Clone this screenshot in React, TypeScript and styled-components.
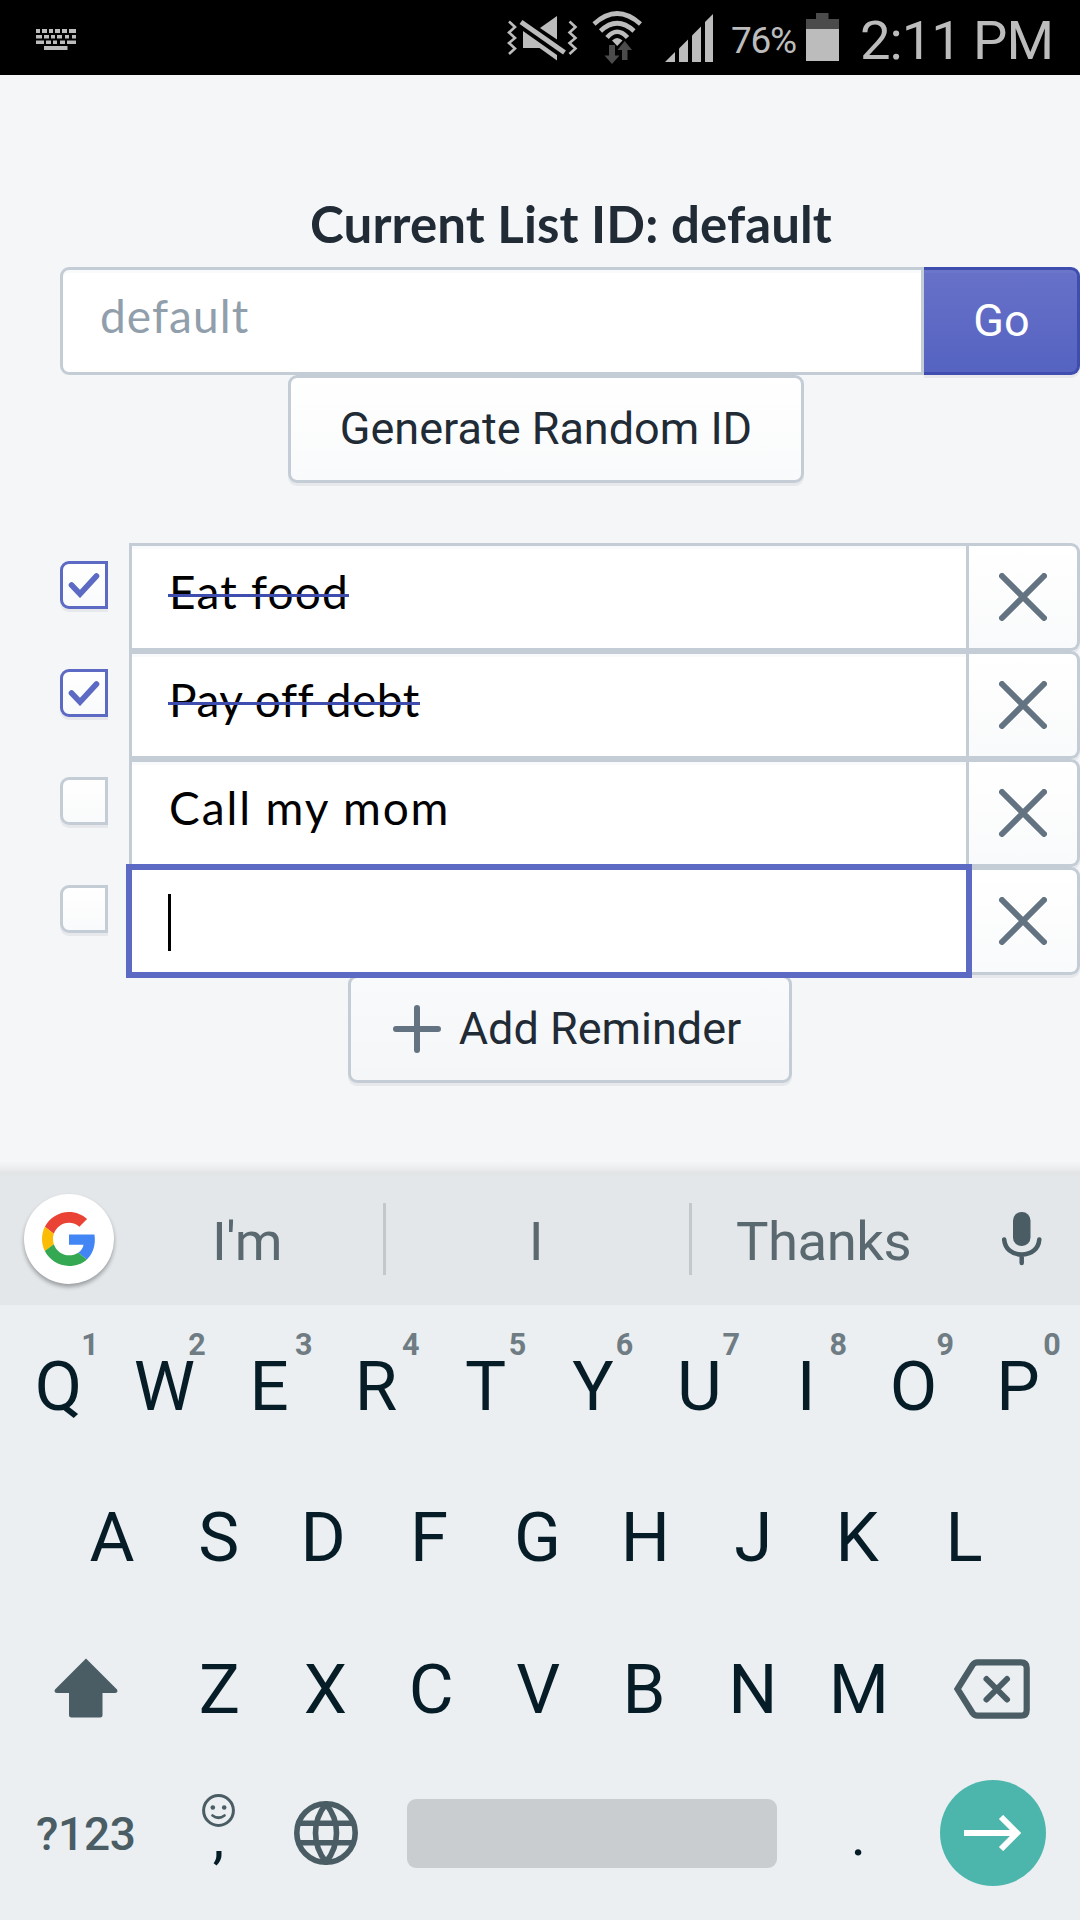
import React from "react";
import styled, { createGlobalStyle, css } from "styled-components";

const roboto = `Roboto, "Liberation Sans", sans-serif`;
const grotesk = `Lato, "Liberation Sans", sans-serif`;

const GlobalStyle = createGlobalStyle`
  *, *::before, *::after { box-sizing: border-box; }
  body { margin: 0; background: #f4f6f8; }
  button { appearance: none; margin: 0; padding: 0; border: 0; background: none; font: inherit; color: inherit; }
  svg { display: block; flex: none; }
`;

const Screen = styled.div`
  width: 1080px;
  height: 1920px;
  display: flex;
  flex-direction: column;
  overflow: hidden;
  background: #f4f6f8;
  font-family: ${roboto};
`;

/* ---------- status bar ---------- */

const StatusBar = styled.header`
  height: 75px;
  flex: none;
  display: flex;
  align-items: flex-start;
  background: #000;
  color: #bcbcbc;
`;

const StatusIcon = styled.svg<{ $left: number; $top: number }>`
  margin: ${(p) => p.$top}px 0 0 ${(p) => p.$left}px;
`;

const Battery = styled.span`
  width: 67px;
  margin: 19px 0 0 17px;
  font-size: 37px;
  line-height: 44px;
  letter-spacing: -1.3px;
  white-space: nowrap;
`;

const Clock = styled.time`
  margin: 8px 0 0 21px;
  font-size: 54.5px;
  line-height: 64px;
  letter-spacing: -1.1px;
  white-space: nowrap;
`;

/* ---------- page ---------- */

const Page = styled.main`
  height: 1086px;
  flex: none;
  padding-left: 60px;
  display: flex;
  flex-direction: column;
`;

const Title = styled.h1`
  height: 192px;
  margin: 0;
  padding: 0 0 13px 2px;
  display: flex;
  align-items: flex-end;
  justify-content: center;
  font: 700 51px/60px ${grotesk};
  letter-spacing: 0.1px;
  color: #212b36;
  white-space: nowrap;
`;

const SearchRow = styled.form`
  display: flex;
  height: 108px;
`;

const Field = styled.div<{ $rounded?: boolean; $muted?: boolean; $focused?: boolean }>`
  flex: 1;
  height: 108px;
  display: flex;
  align-items: center;
  padding: 0 36px 10px;
  background: #fff;
  border: 3px solid #c4cdd5;
  border-radius: ${(p) => (p.$rounded ? "9px 0 0 9px" : "0")};
  box-shadow: inset 0 3px 0 #f9fafb;
  font: 400 46px/60px ${grotesk};
  color: ${(p) => (p.$muted ? "#919eab" : "#000")};
  white-space: nowrap;
  ${(p) =>
    p.$focused &&
    css`
      position: relative;
      z-index: 1;
      padding-bottom: 0;
      border-color: #5c6ac4;
      box-shadow: 0 0 0 3px #5c6ac4;
    `}
`;

const FieldText = styled.span<{ $done?: boolean; $spacing: number }>`
  position: relative;
  padding-left: 1px;
  letter-spacing: ${(p) => p.$spacing}px;
  ${(p) =>
    p.$done &&
    css`
      &::after {
        content: "";
        position: absolute;
        left: 0;
        right: 0;
        top: 32px;
        height: 3px;
        background: #3f4eae;
      }
    `}
`;

const Caret = styled.span`
  width: 3px;
  height: 57px;
  background: #000;
  margin-top: 3px;
`;

const buttonText = css`
  font: 400 45px/54px ${roboto};
  white-space: nowrap;
`;

const GoButton = styled.button`
  && {
    ${buttonText}
    width: 156px;
    height: 108px;
    padding-left: 2px;
    color: #fff;
    background: linear-gradient(180deg, #6771c8, #5563c1);
    border: 3px solid #3f4eae;
    border-left: 0;
    border-radius: 0 9px 9px 0;
    box-shadow: inset 0 3px 0 #6b75c9, 0 3px 0 #e6e8ec;
  }
`;

const OutlineButton = styled.button<{ $width: number; $shift?: number; $flat?: boolean }>`
  && {
    ${buttonText}
    align-self: center;
    width: ${(p) => p.$width}px;
    height: 108px;
    margin-right: ${(p) => p.$shift ?? 0}px;
    padding-right: ${(p) => (p.$flat ? 6 : 0)}px;
    display: flex;
    align-items: center;
    justify-content: center;
    gap: 18px;
    color: #212b36;
    background: ${(p) =>
      p.$flat ? "linear-gradient(180deg, #f9fafb, #f4f6f8)" : "linear-gradient(180deg, #fff, #f9fafb)"};
    border: 3px solid #c4cdd5;
    border-radius: 9px;
    box-shadow: 0 3px 0 #e6e8ec;
  }
`;

const List = styled.ul`
  list-style: none;
  margin: 60px 0 0;
  padding: 0;
`;

const Item = styled.li`
  display: flex;
  height: 108px;
`;

const Checkbox = styled.span<{ $checked: boolean }>`
  width: 48px;
  height: 48px;
  margin: 18px 21px 0 0;
  display: grid;
  place-items: center;
  border: 3px solid ${(p) => (p.$checked ? "#5c6ac4" : "#c4cdd5")};
  border-radius: 9px 0 0 9px;
  background: linear-gradient(180deg, #fff, #f9fafb);
  box-shadow: 0 3px 0 #e6e8ec;
`;

const DeleteButton = styled.button`
  && {
    width: 111px;
    height: 108px;
    display: flex;
    align-items: center;
    justify-content: center;
    border: 3px solid #c4cdd5;
    border-left: 0;
    border-radius: 0 9px 9px 0;
    background: linear-gradient(180deg, #fff, #f9fafb);
    box-shadow: 0 3px 0 #e6e8ec;
  }
`;

/* ---------- keyboard ---------- */

const Keyboard = styled.section`
  flex: 1;
  display: flex;
  flex-direction: column;
  background: #ebeff2;
  color: #061d27;
`;

const Suggestions = styled.div`
  height: 144px;
  flex: none;
  display: flex;
  align-items: center;
  padding: 12px 0 0 24px;
  background: linear-gradient(180deg, #f4f6f8 0, #eeeff1 6px, #e2e4e5 12px, #e3e7ea 17px);
`;

const GoogleBadge = styled.span`
  width: 90px;
  height: 90px;
  display: grid;
  place-items: center;
  border-radius: 50%;
  background: #fff;
  box-shadow: 0 3px 4px rgba(0, 0, 0, 0.32);
`;

const Suggestion = styled.span<{ $width: number }>`
  width: ${(p) => p.$width}px;
  padding: 4px 3px 0 0;
  text-align: center;
  font-size: 54.5px;
  line-height: 64px;
  letter-spacing: -0.5px;
  color: #5a686f;
`;

const Divider = styled.i`
  width: 3px;
  height: 72px;
  background: #c3c8cb;
`;

const KeyRow = styled.div<{ $pad: number; $height: number }>`
  height: ${(p) => p.$height}px;
  flex: none;
  display: flex;
  align-items: center;
  padding: 0 ${(p) => p.$pad}px;
`;

const Key = styled.span<{ $width?: number; $nudge?: number; $lift?: number }>`
  position: relative;
  width: ${(p) => p.$width ?? 106.9}px;
  height: 82px;
  flex: none;
  display: flex;
  align-items: center;
  justify-content: center;
  padding: 0 ${(p) => 2 * (p.$nudge ?? 0)}px ${(p) => 2 * (p.$lift ?? 0)}px 0;
  font-size: 69px;
  line-height: 82px;
`;

const Hint = styled.sup`
  position: absolute;
  left: 75px;
  top: -19px;
  width: 20px;
  text-align: center;
  font-size: 30.5px;
  font-weight: 700;
  line-height: 36px;
  color: #6f7c83;
`;

const SymbolsKey = styled.span`
  width: 161px;
  padding: 3px 0 0 36px;
  font-size: 46px;
  font-weight: 500;
  line-height: 54px;
  letter-spacing: -0.3px;
  color: #4a5c64;
`;

const CommaKey = styled.span`
  width: 115px;
  height: 120px;
  display: flex;
  flex-direction: column;
  align-items: center;
  padding-top: 21px;
  font-size: 58px;
  line-height: 58px;
`;

const CommaMark = styled.span`
  margin-top: -19px;
`;

const SpaceBar = styled.span`
  width: 370px;
  height: 69px;
  margin: 1px 0 0 31px;
  border-radius: 9px;
  background: #c9cdd0;
`;

const PeriodKey = styled.span`
  width: 163px;
  text-align: center;
  font-size: 58px;
  line-height: 58px;
  padding-top: 5px;
`;

const EnterKey = styled.span`
  width: 106px;
  height: 106px;
  display: grid;
  place-items: center;
  padding-right: 1px;
  border-radius: 50%;
  background: #4db6ac;
`;

const ICON = "#4a5c64";

const KeyboardGlyph = () => (
  <StatusIcon $left={36} $top={29} width="40" height="22" viewBox="0 0 40 22" fill="#bcbcbc">
    {[[0, 4], [6, 5], [13, 4], [19, 5], [26, 5], [33, 7]].map(([x, w]) => <rect key={x} x={x} y="0" width={w} height="4" />)}
    {[[0, 6], [8, 5], [15, 4], [21, 5], [29, 4], [36, 4]].map(([x, w]) => <rect key={x} x={x} y="6" width={w} height="3.5" />)}
    {[[0, 8], [10, 5], [17, 4], [24, 5], [31, 9]].map(([x, w]) => <rect key={x} x={x} y="11.5" width={w} height="3.5" />)}
    <rect x="8" y="17" width="23.5" height="4" />
  </StatusIcon>
);

const MuteGlyph = () => (
  <StatusIcon $left={431} $top={16} width="72" height="52" viewBox="507 16 72 52" fill="#bcbcbc">
    <path d="M509 21.5L515 27L509 32.5L515 38L509 43L515 48.5L509 54" fill="none" stroke="#bcbcbc" strokeWidth="2.6" />
    <path d="M569.500 21.500L575.500 27L569.500 32.500L575.500 38L569.500 43L575.500 48.500L569.500 54" fill="none" stroke="#bcbcbc" strokeWidth="2.6" />
    <path d="M557 16V39.500L540 28Z" />
    <path d="M523 31L557 55V60.500L539.500 48H523Z" />
    <path d="M521 22L564.500 52.500" stroke="#bcbcbc" strokeWidth="5" />
  </StatusIcon>
);

const WifiGlyph = () => (
  <StatusIcon $left={13} $top={10} width="50" height="56" viewBox="592 10 50 56" fill="none" stroke="#bcbcbc" strokeWidth="4.600">
    <path d="M594 24Q617 3 640.500 24" />
    <path d="M600.500 31Q617 15.500 634 31" />
    <path d="M607 37.500Q617 26 627.500 37.500" />
    <path d="M612 40.500Q617 35.500 622.500 40.500L617.200 46Z" fill="#bcbcbc" stroke="none" />
    <path d="M609 45h6v10.500h4.500l-7.500 8.500l-7.500-8.500h4.500z" fill="#4b4b4b" stroke="none" />
    <path d="M622 60v-10h-4.500l7.200-9l7.300 9h-4.500v10z" fill="#4b4b4b" stroke="none" />
  </StatusIcon>
);

const SignalGlyph = () => (
  <StatusIcon $left={23} $top={14} width="49" height="48" viewBox="665 14 49 48" fill="#bcbcbc">
    <path d="M665 62L675 52V62Z" />
    <path d="M679 62V48.500L688 39.500V62Z" />
    <path d="M692 62V35.500L701 26.500V62Z" />
    <path d="M705 62V22L713 14V62Z" />
  </StatusIcon>
);

const BatteryGlyph = () => (
  <StatusIcon $left={8} $top={13} width="33" height="48" viewBox="0 0 33 48" fill="#4b4b4b">
    <path d="M10 0H22.500V6H33V16H0V6H10Z" />
    <path d="M0 16H33V48H0Z" fill="#bcbcbc" />
  </StatusIcon>
);

const CheckGlyph = () => (
  <svg width="32" height="26" viewBox="68 572 32 26" fill="none">
    <path d="M71.500 585L80 594L96.500 576" stroke="#5c6ac4" strokeWidth="5.600" strokeLinecap="round" />
  </svg>
);

const CrossGlyph = () => (
  <svg width="48" height="48" viewBox="0 0 48 48" stroke="#637381" strokeWidth="6" strokeLinecap="round">
    <path d="M3 3L45 45M45 3L3 45" />
  </svg>
);

const PlusGlyph = () => (
  <svg width="48" height="48" viewBox="0 0 48 48" stroke="#637381" strokeWidth="6" strokeLinecap="round">
    <path d="M24 3V45M3 24H45" />
  </svg>
);

const GoogleGlyph = () => (
  <svg width="54" height="54" viewBox="0 0 48 48">
    <path fill="#EA4335" d="M24 9.500c3.540 0 6.710 1.220 9.210 3.600l6.850-6.850C35.900 2.380 30.470 0 24 0 14.620 0 6.510 5.380 2.560 13.220l7.980 6.190C12.430 13.720 17.740 9.500 24 9.500z" />
    <path fill="#4285F4" d="M46.980 24.550c0-1.570-.15-3.090-.38-4.550H24v9.020h12.940c-.58 2.960-2.260 5.480-4.780 7.180l7.730 6c4.510-4.180 7.090-10.360 7.090-17.650z" />
    <path fill="#FBBC05" d="M10.530 28.590c-.48-1.450-.76-2.990-.76-4.590s.27-3.140.76-4.590l-7.980-6.190C.92 16.460 0 20.120 0 24c0 3.880.92 7.540 2.560 10.780l7.970-6.190z" />
    <path fill="#34A853" d="M24 48c6.480 0 11.930-2.130 15.890-5.810l-7.730-6c-2.150 1.450-4.920 2.300-8.160 2.300-6.260 0-11.570-4.220-13.470-9.910l-7.980 6.190C6.510 42.620 14.620 48 24 48z" />
  </svg>
);

const MicSlot = styled.span`
  margin-left: 44px;
`;

const MicGlyph = () => (
  <svg width="40" height="54" viewBox="0 0 40 54" fill="none">
    <rect x="11" y="0" width="17.500" height="34" rx="8.500" fill={ICON} />
    <path d="M2.200 27.500C3 37 10 42.500 19.700 42.500S36.500 37 37.300 27.500M19.700 43V51" stroke={ICON} strokeWidth="4.500" strokeLinecap="round" />
  </svg>
);

const ShiftGlyph = () => (
  <svg width="64" height="60" viewBox="0 0 64 60" fill={ICON}>
    <path d="M32 .5L63 31.500Q64.500 35 61 35H48.500V57Q48.500 59.500 46 59.500H17.500Q15 59.500 15 57V35H3Q-.5 35 1 31.500Z" />
  </svg>
);

const BackspaceGlyph = () => (
  <svg width="76" height="60" viewBox="0 0 76 60" fill="none" stroke={ICON}>
    <path d="M3.500 30L18.500 6Q20.500 3.300 23.500 3.300H67Q72.700 3.300 72.700 9V51Q72.700 56.700 67 56.700H23.500Q20.500 56.700 18.500 54Z" strokeWidth="6.200" />
    <path d="M32.500 20L53 40.500M53 20L32.500 40.500" strokeWidth="6" strokeLinecap="round" />
  </svg>
);

const SmileGlyph = () => (
  <svg width="33" height="33" viewBox="0 0 33 33" fill="none" stroke={ICON}>
    <circle cx="16.500" cy="16.500" r="14.900" strokeWidth="3" />
    <circle cx="10.800" cy="13.500" r="2.300" fill={ICON} stroke="none" />
    <circle cx="22.200" cy="13.500" r="2.300" fill={ICON} stroke="none" />
    <path d="M10.500 21.500Q16.500 26 22.500 21.500" strokeWidth="2.700" strokeLinecap="round" />
  </svg>
);

const GlobeGlyph = () => (
  <svg width="64" height="64" viewBox="0 0 64 64" fill="none" stroke={ICON} strokeWidth="5.600">
    <circle cx="32" cy="32" r="29.200" />
    <path d="M32 3C18 20 18 44 32 61C46 44 46 20 32 3ZM6 22.300H58M6 41.700H58" />
  </svg>
);

const ArrowGlyph = () => (
  <svg width="58" height="36" viewBox="0 0 58 36" fill="none" stroke="#fff" strokeWidth="6">
    <path d="M0 18H52M37 2L53 18L37 34" />
  </svg>
);

/* Optical centring of each letter in its key, in pixels to the left. */
const nudges: Record<string, number> = {
  W: 1, E: 3, R: 3, T: 0.5, U: 0.5, I: 0.5, P: 2.5,
  D: 2.5, F: 3.5, G: 2, H: 1, K: 3, L: 3,
  X: 1, C: 2, V: 2, B: 3, N: 1, M: 2,
};

const reminders = [
  { text: "Eat food", done: true, spacing: 1.2 },
  { text: "Pay off debt", done: true, spacing: 0.55 },
  { text: "Call my mom", done: false, spacing: 1.9 },
  { text: "", done: false, spacing: 0 },
];

const LetterKeys = ({ letters, hints }: { letters: string; hints?: boolean }) => (
  <>
    {letters.split("").map((k, i) => (
      <Key key={k} $nudge={nudges[k]}>
        {k}
        {hints && <Hint>{(i + 1) % 10}</Hint>}
      </Key>
    ))}
  </>
);

export default function App() {
  return (
    <Screen>
      <GlobalStyle />
      <StatusBar>
        <KeyboardGlyph />
        <MuteGlyph />
        <WifiGlyph />
        <SignalGlyph />
        <Battery>76%</Battery>
        <BatteryGlyph />
        <Clock>2:11 PM</Clock>
      </StatusBar>

      <Page>
        <Title>Current List ID: default</Title>
        <SearchRow>
          <Field $rounded $muted>
            <FieldText $spacing={1.1}>default</FieldText>
          </Field>
          <GoButton type="button">Go</GoButton>
        </SearchRow>
        <OutlineButton $width={516} $shift={48}>Generate Random ID</OutlineButton>

        <List>
          {reminders.map((r) => (
            <Item key={r.text}>
              <Checkbox $checked={r.done}>{r.done && <CheckGlyph />}</Checkbox>
              <Field $focused={!r.text}>
                {r.text ? (
                  <FieldText $done={r.done} $spacing={r.spacing}>{r.text}</FieldText>
                ) : (
                  <Caret />
                )}
              </Field>
              <DeleteButton aria-label="Delete"><CrossGlyph /></DeleteButton>
            </Item>
          ))}
        </List>
        <OutlineButton $width={444} $flat>
          <PlusGlyph />
          Add Reminder
        </OutlineButton>
      </Page>

      <Keyboard>
        <Suggestions>
          <GoogleBadge><GoogleGlyph /></GoogleBadge>
          <Suggestion $width={269}>I'm</Suggestion>
          <Divider />
          <Suggestion $width={303}>I</Suggestion>
          <Divider />
          <Suggestion $width={266}>Thanks</Suggestion>
          <MicSlot><MicGlyph /></MicSlot>
        </Suggestions>
        <KeyRow $pad={5} $height={163}>
          <LetterKeys letters="QWERTYUIOP" hints />
        </KeyRow>
        <KeyRow $pad={58.5} $height={139}>
          <LetterKeys letters="ASDFGHJKL" />
        </KeyRow>
        <KeyRow $pad={5} $height={165}>
          <Key $width={161} $lift={1.5}><ShiftGlyph /></Key>
          <LetterKeys letters="ZXCVBNM" />
          <Key $width={158} $nudge={1} $lift={1}><BackspaceGlyph /></Key>
        </KeyRow>
        <KeyRow $pad={0} $height={121}>
          <SymbolsKey>?123</SymbolsKey>
          <CommaKey>
            <SmileGlyph />
            <CommaMark>,</CommaMark>
          </CommaKey>
          <Key $width={100} $nudge={0.5}><GlobeGlyph /></Key>
          <SpaceBar />
          <PeriodKey>.</PeriodKey>
          <EnterKey><ArrowGlyph /></EnterKey>
        </KeyRow>
      </Keyboard>
    </Screen>
  );
}
